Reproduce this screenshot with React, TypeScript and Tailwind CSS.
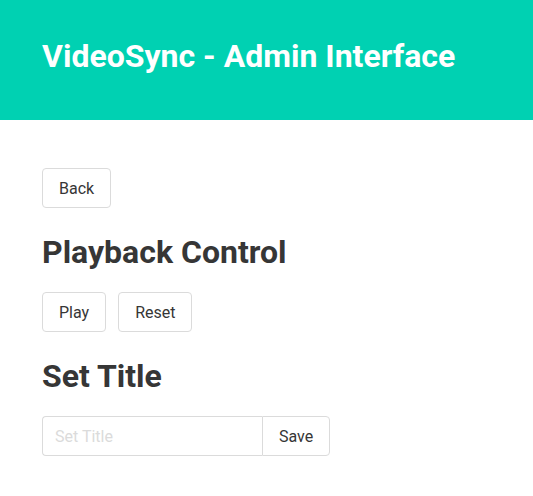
import { useState } from 'react'

const btn =
  'h-10 rounded-[4px] border border-[#dbdbdb] bg-white px-4 pt-px text-base text-[#363636] leading-none'

export default function App() {
  const [title, setTitle] = useState('')

  return (
    <div className="min-h-[496px] bg-white font-['Roboto',sans-serif] text-[#363636]">
      <header className="flex h-[120px] items-center bg-[#00d1b2] px-[42px] pb-2">
        <h1 className="text-[32px] font-bold leading-none text-white">
          VideoSync - Admin Interface
        </h1>
      </header>

      <main className="px-[42px] pt-12">
        <button type="button" className={btn}>
          Back
        </button>

        <h2 className="mt-6 mb-6 pt-1 text-[32px] font-bold leading-[32px]">
          Playback Control
        </h2>
        <div className="flex gap-3">
          <button type="button" className={btn}>
            Play
          </button>
          <button type="button" className={btn}>
            Reset
          </button>
        </div>

        <h2 className="mt-6 mb-6 pt-1 text-[32px] font-bold leading-[32px]">
          Set Title
        </h2>
        <div className="flex">
          <input
            value={title}
            onChange={(e) => setTitle(e.target.value)}
            placeholder="Set Title"
            className="h-10 w-[220px] rounded-l-[4px] border border-r-0 border-[#dbdbdb] px-3 text-base text-[#363636] placeholder:text-[#dbdbdb] focus:outline-none"
          />
          <button
            type="button"
            className="h-10 rounded-r-[4px] border border-[#dbdbdb] bg-white px-4 pt-px text-base leading-none text-[#363636]"
          >
            Save
          </button>
        </div>
      </main>
    </div>
  )
}
